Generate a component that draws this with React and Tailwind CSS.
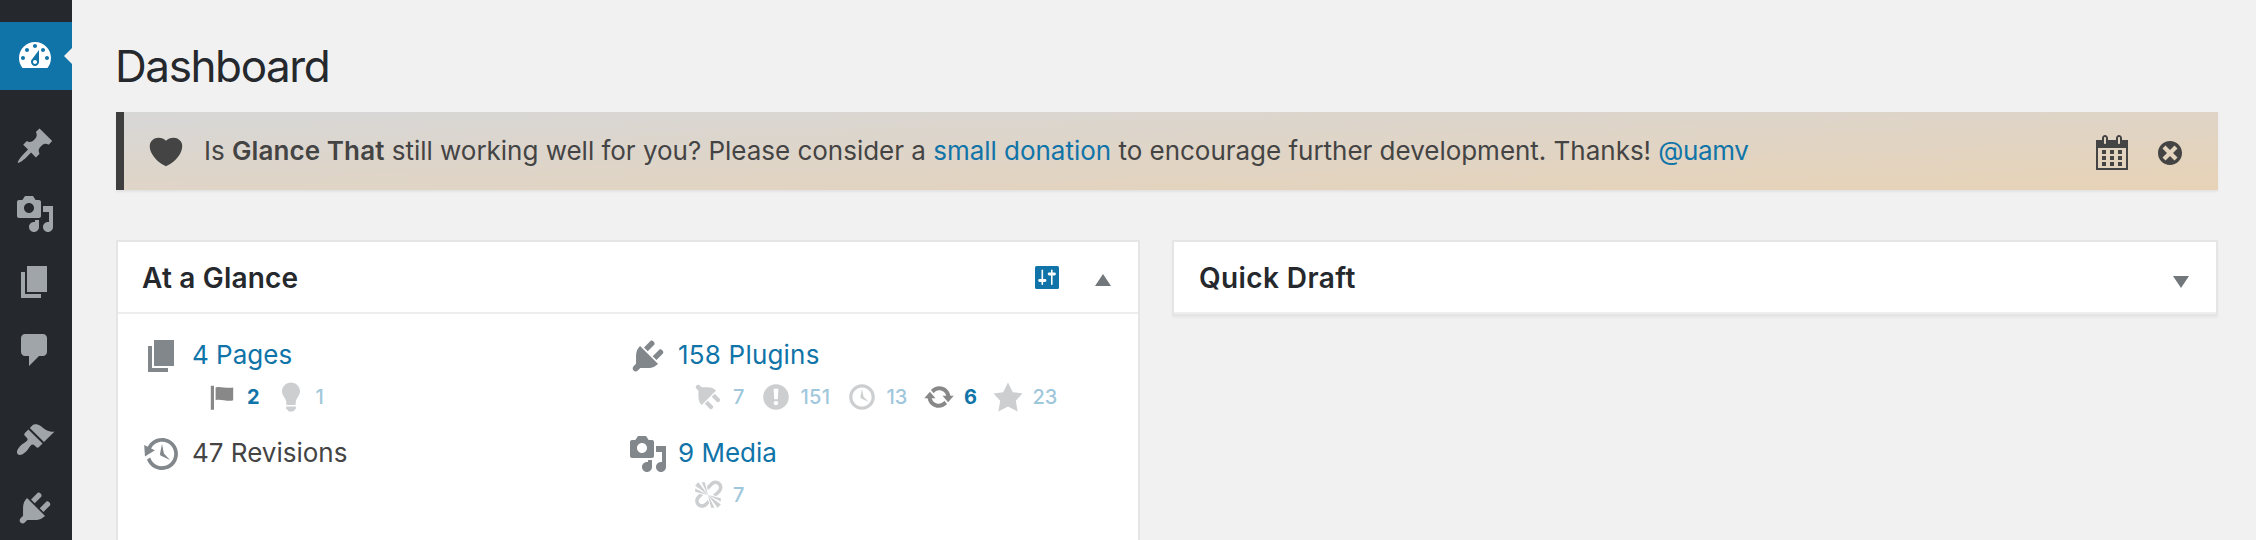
const PATHS = {
  dashboard:
    "M3.76 16h12.48c1.1-1.37 1.76-3.11 1.76-5 0-4.42-3.58-8-8-8s-8 3.58-8 8c0 1.89.66 3.63 1.76 5zM10 4c.55 0 1 .45 1 1s-.45 1-1 1-1-.45-1-1 .45-1 1-1zM6 6c.55 0 1 .45 1 1s-.45 1-1 1-1-.45-1-1 .45-1 1-1zm8 0c.55 0 1 .45 1 1s-.45 1-1 1-1-.45-1-1 .45-1 1-1zm-5.37 5.55L12 7v6c0 1.1-.9 2-2 2s-2-.9-2-2c0-.57.24-1.08.63-1.45zM4 10c.55 0 1 .45 1 1s-.45 1-1 1-1-.45-1-1 .45-1 1-1zm12 0c.55 0 1 .45 1 1s-.45 1-1 1-1-.45-1-1 .45-1 1-1zm-5 3c0-.55-.45-1-1-1s-1 .45-1 1 .45 1 1 1 1-.45 1-1z",
  post:
    "M10.44 3.02l1.82-1.82 6.36 6.35-1.83 1.82c-1.05-.68-2.48-.57-3.41.36l-.75.75c-.92.93-1.04 2.35-.35 3.41l-1.83 1.82-2.41-2.41-2.8 2.79c-.42.42-3.38 2.71-3.8 2.29s1.86-3.39 2.28-3.81l2.79-2.79L4.1 9.36l1.83-1.82c1.05.69 2.48.57 3.4-.36l.75-.75c.93-.92 1.05-2.35.36-3.41z",
  media:
    "M13 11V4c0-.55-.45-1-1-1h-1.67L9 1H5L3.67 3H2c-.55 0-1 .45-1 1v7c0 .55.45 1 1 1h10c.55 0 1-.45 1-1zM7 4.5c1.38 0 2.5 1.12 2.5 2.5S8.38 9.5 7 9.5 4.5 8.38 4.5 7 5.62 4.5 7 4.5zM14 6h5v10.5c0 1.38-1.12 2.5-2.5 2.5S14 17.88 14 16.5s1.12-2.5 2.5-2.5c.17 0 .34.02.5.05V9h-3V6zm-4 8.05V13h2v3.5c0 1.38-1.12 2.5-2.5 2.5S7 17.88 7 16.5 8.12 14 9.5 14c.17 0 .34.02.5.05z",
  page: "M6 15V2h10v13H6zm-1 1h8v2H3V5h2v11z",
  comments:
    "M5 2h9c1.1 0 2 .9 2 2v7c0 1.1-.9 2-2 2h-2l-5 5v-5H5c-1.1 0-2-.9-2-2V4c0-1.1.9-2 2-2z",
  appearance:
    "M14.48 11.06L7.41 3.99l1.5-1.5c.5-.56 2.3-.47 3.51.32 1.21.8 1.43 1.28 2.91 2.1 1.18.64 2.45 1.26 4.45.85zm-.71.71L6.7 4.7 4.93 6.47c-.39.39-.39 1.02 0 1.41l1.06 1.06c.39.39.39 1.03 0 1.42-.6.6-1.43 1.11-2.21 1.69-.35.26-.7.53-1.01.84C1.43 14.23.4 16.08 1.4 17.07c.99 1 2.84-.03 4.18-1.36.31-.31.58-.66.85-1.02.57-.78 1.08-1.61 1.69-2.21.39-.39 1.02-.39 1.41 0l1.06 1.06c.39.39 1.02.39 1.41 0z",
  plugins:
    "M13.11 4.36L9.87 7.6 8 5.73l3.24-3.24c.35-.34 1.05-.2 1.56.32.52.51.66 1.21.31 1.55zm-8 1.77l.91-1.12 9.01 9.01-1.19.84c-.71.71-2.63 1.16-3.82 1.16H6.14L4.9 17.26c-.59.59-1.54.59-2.12 0-.59-.58-.59-1.53 0-2.12l1.24-1.24v-3.88c0-1.13.4-3.19 1.09-3.89zm7.26 3.97l3.24-3.24c.34-.35 1.04-.21 1.55.31.52.51.66 1.21.31 1.55l-3.24 3.25z",
  heart:
    "M10 17.12c3.33-1.4 5.74-3.79 7.04-6.21 1.28-2.41 1.46-4.81.32-6.25-1.03-1.29-2.37-1.78-3.73-1.74s-2.68.63-3.63 1.46c-.95-.83-2.27-1.42-3.63-1.46s-2.7.45-3.73 1.74c-1.14 1.44-.96 3.84.34 6.25 1.28 2.42 3.69 4.81 7.02 6.21z",
  calendar:
    "M15 4h3v15H2V4h3V3c0-.41.15-.76.44-1.06.29-.29.65-.44 1.06-.44s.77.15 1.06.44c.29.3.44.65.44 1.06v1h4V3c0-.41.15-.76.44-1.06.29-.29.65-.44 1.06-.44s.77.15 1.06.44c.29.3.44.65.44 1.06v1zM6 3v2.5c0 .14.05.26.15.36.09.09.21.14.35.14s.26-.05.35-.14c.1-.1.15-.22.15-.36V3c0-.14-.05-.26-.15-.35-.09-.1-.21-.15-.35-.15s-.26.05-.35.15c-.1.09-.15.21-.15.35zm7 0v2.5c0 .14.05.26.14.36.1.09.22.14.36.14s.26-.05.36-.14c.09-.1.14-.22.14-.36V3c0-.14-.05-.26-.14-.35-.1-.1-.22-.15-.36-.15s-.26.05-.36.15c-.09.09-.14.21-.14.35zm4 15V8H3v10h14zM7 9v2H5V9h2zm2 0h2v2H9V9zm4 2V9h2v2h-2zm-8 1h2v2H5v-2zm4 0h2v2H9v-2zm4 0h2v2h-2v-2zm-8 3h2v2H5v-2zm4 0h2v2H9v-2zm4 0h2v2h-2v-2z",
  dismiss:
    "M10 2c4.42 0 8 3.58 8 8s-3.58 8-8 8-8-3.58-8-8 3.58-8 8-8zm5 11l-3-3 3-3-2-2-3 3-3-3-2 2 3 3-3 3 2 2 3-3 3 3z",
  backup:
    "M13.65 2.88c3.93 2.01 5.48 6.84 3.47 10.77s-6.83 5.48-10.77 3.47c-1.87-.96-3.2-2.56-3.86-4.4l1.64-1.03c.45 1.57 1.52 2.95 3.08 3.76 3.01 1.54 6.69.35 8.23-2.66 1.55-3.01.36-6.69-2.65-8.24C9.78 3.01 6.1 4.2 4.56 7.21l1.88.97-4.95 3.08-.39-5.82 1.78.91C4.9 2.4 9.75.89 13.65 2.88zm-4.36 7.83C9.11 10.53 9 10.28 9 10c0-.07.03-.12.04-.19h-.01L10 5l.97 4.81L14 13l-4.5-2.12.02-.02c-.08-.04-.16-.09-.23-.15z",
  flag: "M5 18V3H3v15h2zm1-6V4c3-1 7 1 11 0v8c-3 1.27-8-1-11 0z",
  lightbulb:
    "M10 1c3.11 0 5.63 2.52 5.63 5.62 0 1.84-2.03 4.58-2.03 4.58-.33.44-.6 1.25-.6 1.8v1c0 .55-.45 1-1 1H8c-.55 0-1-.45-1-1v-1c0-.55-.27-1.36-.6-1.8 0 0-2.02-2.74-2.02-4.58C4.38 3.52 6.89 1 10 1zM7 16.87V16h6v.87c0 .62-.13 1.13-.75 1.13H12c0 .62-.4 1-1.02 1h-2c-.61 0-.98-.38-.98-1h-.25c-.62 0-.75-.51-.75-1.13z",
  warning:
    "M10 2c4.42 0 8 3.58 8 8s-3.58 8-8 8-8-3.58-8-8 3.58-8 8-8zm1.13 9.38l.35-6.46H8.52l.35 6.46h2.26zm-.09 3.36c.24-.23.37-.55.37-.96 0-.42-.12-.74-.36-.97s-.59-.35-1.06-.35-.82.12-1.07.35-.37.55-.37.97c0 .41.13.73.38.96.26.23.61.34 1.06.34s.8-.11 1.05-.34z",
  clock:
    "M10 2c4.42 0 8 3.58 8 8s-3.58 8-8 8-8-3.58-8-8 3.58-8 8-8zm0 14c3.31 0 6-2.69 6-6s-2.69-6-6-6-6 2.69-6 6 2.69 6 6 6zm-.71-5.29c.07.05.14.1.23.15l-.02.02L14 13l-3.03-3.19L10 5l-.97 4.81h.01c0 .02-.01.05-.02.09S9 9.97 9 10c0 .28.1.52.29.71z",
  update:
    "M10.2 3.28c3.53 0 6.43 2.61 6.92 6h2.08l-3.5 4-3.5-4h2.32c-.45-1.97-2.21-3.45-4.32-3.45-1.45 0-2.73.71-3.54 1.78L4.95 5.66C6.23 4.2 8.11 3.28 10.2 3.28zm-.4 13.44c-3.52 0-6.43-2.61-6.92-6H.8l3.5-4c1.17 1.33 2.33 2.67 3.5 4H5.48c.45 1.97 2.21 3.45 4.32 3.45 1.45 0 2.73-.71 3.54-1.78l1.71 1.95c-1.28 1.46-3.15 2.38-5.25 2.38z",
  star: "M10 1l3 6 6 .75-4.12 4.62L16 19l-6-3-6 3 1.13-6.63L1 7.75 7 7z",
  unlink:
    "M17.74 2.26c1.68 1.69 1.68 4.41 0 6.1l-1.53 1.52c-.32.33-.69.58-1.08.77L13 10l1.69-1.64.76-.77.76-.76c.84-.84.84-2.2 0-3.04-.84-.85-2.2-.85-3.04 0l-.77.76-.76.76L10 7l-.65-2.14c.19-.38.44-.75.77-1.07l1.52-1.53c1.69-1.68 4.42-1.68 6.1 0zM2 4l8 6-6-8zm4-2l4 8-2-8H6zM2 6l8 4-8-2V6zm7.36 7.69L10 13l.74 2.35-1.38 1.39c-1.69 1.68-4.41 1.68-6.1 0-1.68-1.68-1.68-4.42 0-6.1l1.39-1.38L7 10l-.69.64-1.52 1.53c-.85.84-.85 2.2 0 3.04.84.85 2.2.85 3.04 0zM18 16l-8-6 6 8zm-4 2l-4-8 2 8h2zm4-4l-8-4 8 2v2z",
};

function Icon({ name, className = "size-10" }) {
  return (
    <svg viewBox="0 0 20 20" fill="currentColor" aria-hidden="true" className={`shrink-0 ${className}`}>
      <path d={PATHS[name]} />
    </svg>
  );
}

function MenuItem({ icon, active }) {
  return (
    <li className={`relative flex h-[68px] shrink-0 items-center pl-[15px] ${active ? "bg-[#1074a8] text-white" : "text-[#a0a5a9]"}`}>
      <Icon name={icon} />
      {active && (
        <span className="absolute top-[26px] right-0 border-y-8 border-r-8 border-y-transparent border-r-[#f1f1f1]" />
      )}
    </li>
  );
}

function Sidebar() {
  return (
    <nav className="w-[72px] shrink-0 bg-[#25282c]">
      <ul className="flex flex-col gap-[22px] pt-[22px]">
        <MenuItem icon="dashboard" active />
        <li>
          <ul>
            <MenuItem icon="post" />
            <MenuItem icon="media" />
            <MenuItem icon="page" />
            <MenuItem icon="comments" />
          </ul>
        </li>
        <li>
          <ul>
            <MenuItem icon="appearance" />
            <MenuItem icon="plugins" />
          </ul>
        </li>
      </ul>
    </nav>
  );
}

function Notice() {
  return (
    <div className="flex h-[78px] items-center border-l-8 border-[#3e3e3e] bg-linear-to-br from-[#d7d7d7] to-[#e7d2b6] pt-0.5 pr-[33px] pl-[22px] text-[#444] shadow-[0_2px_2px_rgba(0,0,0,0.06)]">
      <Icon name="heart" />
      <p className="ml-[18px] flex-1 pb-0.5 text-[26px] leading-[38px] tracking-[-0.02px] whitespace-nowrap">
        Is <strong className="font-semibold tracking-[0.1px]">Glance That</strong> still working well for you? Please consider a{" "}
        <a className="text-[#1074a8]">small donation</a> to encourage further development. Thanks!{" "}
        <a className="text-[#1074a8] tracking-[-0.4px]">@uamv</a>
      </p>
      <Icon name="calendar" />
      <Icon name="dismiss" className="mt-0.5 ml-[23px] size-[30px]" />
    </div>
  );
}

function SlidersIcon() {
  return (
    <svg viewBox="0 0 24 23" className="mt-px h-[23px] w-6" aria-hidden="true">
      <rect width="24" height="23" rx="1.5" fill="#1074a8" />
      <g stroke="#fff" strokeLinecap="round">
        <path d="M7.3 4.2v14M16.8 4.2v14" strokeWidth="1.6" />
        <path d="M4.6 14.5h5.4M14.1 8h5.4" strokeWidth="2.8" />
      </g>
    </svg>
  );
}

function Stat({ icon, value, strong, className = "w-[68.5px]", iconClass = "" }) {
  return (
    <a className={`flex shrink-0 items-center gap-[9px] text-[20px] leading-8 ${className} ${strong ? "" : "opacity-40"}`}>
      <span className={strong ? "text-[#888]" : "text-[#82878c]"}>
        <Icon name={icon} className={`size-8 ${iconClass}`} />
      </span>
      <span className={`pt-px text-[#1074a8] ${strong ? "font-bold" : "font-medium"}`}>{value}</span>
    </a>
  );
}

function Entry({ icon, label, plain, wide, children }) {
  return (
    <li className="h-[98px] w-[486px] shrink-0">
      <div className="flex h-10 items-center">
        <span className="text-[#82878b]">
          <Icon name={icon} />
        </span>
        <span
          className={`ml-[10px] pb-[3px] text-[26px] leading-[37px] ${plain ? "text-[#444]" : "text-[#1074a8]"} ${wide ? "tracking-[0.2px]" : ""}`}
        >
          {label}
        </span>
      </div>
      {children && <div className="mt-1 flex pl-16">{children}</div>}
    </li>
  );
}

export default function App() {
  return (
    <div className="flex h-[540px] overflow-hidden bg-[#f1f1f1] font-['Inter','Noto_Sans',sans-serif]">
      <Sidebar />
      <main className="flex-1 pr-[38px] pl-11">
        <h1 className="-ml-px pt-[37px] text-[44px] leading-[58px] tracking-[-1.4px] text-[#25282c]">Dashboard</h1>
        <div className="mt-[17px]">
          <Notice />
        </div>
        <div className="mt-[50px] flex items-start gap-8">
          <section className="h-[400px] w-[1024px] border-2 border-[#e5e5e5] bg-white">
            <header className="flex h-[72px] items-center border-b-2 border-[#eee] pr-[27px] pl-6">
              <h2 className="flex-1 pt-0.5 text-[28px] leading-[68px] font-semibold tracking-[0.2px] text-[#25282c]">At a Glance</h2>
              <SlidersIcon />
              <span className="mt-1.5 ml-9 border-x-8 border-b-12 border-x-transparent border-b-[#72777b]" />
            </header>
            <ul className="flex flex-wrap pt-[22px] pl-6">
              <Entry icon="page" label="4 Pages">
                <Stat icon="flag" value="2" strong />
                <Stat icon="lightbulb" value="1" />
              </Entry>
              <Entry icon="plugins" label="158 Plugins" wide>
                <Stat icon="plugins" value="7" className="w-[67.5px]" iconClass="-scale-y-100" />
                <Stat icon="warning" value="151" className="w-[86px] tracking-[0.3px]" />
                <Stat icon="clock" value="13" className="w-[77.5px]" />
                <Stat icon="update" value="6" strong />
                <Stat icon="star" value="23" />
              </Entry>
              <Entry icon="backup" label="47 Revisions" plain />
              <Entry icon="media" label="9 Media">
                <Stat icon="unlink" value="7" />
              </Entry>
            </ul>
          </section>
          <section className="h-[76px] flex-1 border-2 border-[#e5e5e5] bg-white shadow-[0_2px_2px_rgba(0,0,0,0.04)]">
            <header className="flex h-[72px] items-center border-b-2 border-[#eee] pr-[27px] pl-[25px]">
              <h2 className="flex-1 pt-0.5 text-[28px] leading-[68px] font-semibold tracking-[0.4px] text-[#25282c]">Quick Draft</h2>
              <span className="mt-2.5 border-x-8 border-t-12 border-x-transparent border-t-[#72777b]" />
            </header>
          </section>
        </div>
      </main>
    </div>
  );
}
